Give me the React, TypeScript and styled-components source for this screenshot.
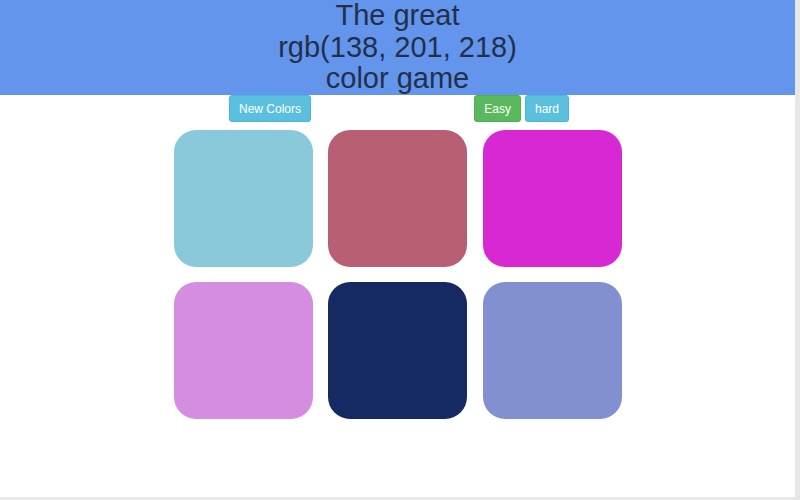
import React from "react";
import styled, { createGlobalStyle } from "styled-components";

const GlobalStyle = createGlobalStyle`
  html, body {
    margin: 0;
    padding: 0;
    background: #ffffff;
    font-family: "Liberation Sans", Arial, sans-serif;
  }
`;

const Page = styled.div`
  width: 795px;
  height: 497px;
  border-right: 5px solid #e8e8e8;
  border-bottom: 3px solid #e8e8e8;
  background: #fff;
`;

const Header = styled.h1`
  margin: 0;
  height: 95px;
  background: #6495ed;
  color: #22304a;
  font-weight: 400;
  font-size: 29px;
  line-height: 31.5px;
  text-align: center;
`;

const Controls = styled.div`
  width: 343px;
  margin: 0 auto;
  padding-left: 3px;
  box-sizing: border-box;
  display: flex;
  justify-content: space-between;
`;

const Group = styled.div`
  display: flex;
  gap: 4px;
`;

const Button = styled.button<{ $variant?: "info" | "success" }>`
  height: 27px;
  padding: 0 9px;
  border: 1px solid
    ${({ $variant }) => ($variant === "success" ? "#4cae4c" : "#46b8da")};
  border-radius: 3px;
  background: ${({ $variant }) =>
    $variant === "success" ? "#5cb85c" : "#5bc0de"};
  color: #fff;
  font-family: "Liberation Sans", Arial, sans-serif;
  font-size: 12px;
  cursor: pointer;
`;

const Board = styled.div`
  margin: 8px auto 0;
  width: 448px;
  display: grid;
  grid-template-columns: repeat(3, 139px);
  column-gap: 15.5px;
  row-gap: 15px;
`;

const Square = styled.div`
  height: 137px;
  border-radius: 22px;
`;

const colors = [
  "rgb(138, 201, 218)",
  "rgb(185, 95, 116)",
  "rgb(216, 40, 212)",
  "rgb(212, 141, 224)",
  "rgb(21, 42, 98)",
  "rgb(130, 144, 210)",
];

export default function App() {
  return (
    <Page>
      <GlobalStyle />
      <Header>
        The great
        <br />
        rgb(138, 201, 218)
        <br />
        color game
      </Header>
      <Controls>
        <Button>New Colors</Button>
        <Group>
          <Button $variant="success">Easy</Button>
          <Button>hard</Button>
        </Group>
      </Controls>
      <Board>
        {colors.map((c) => (
          <Square key={c} style={{ background: c }} />
        ))}
      </Board>
    </Page>
  );
}
